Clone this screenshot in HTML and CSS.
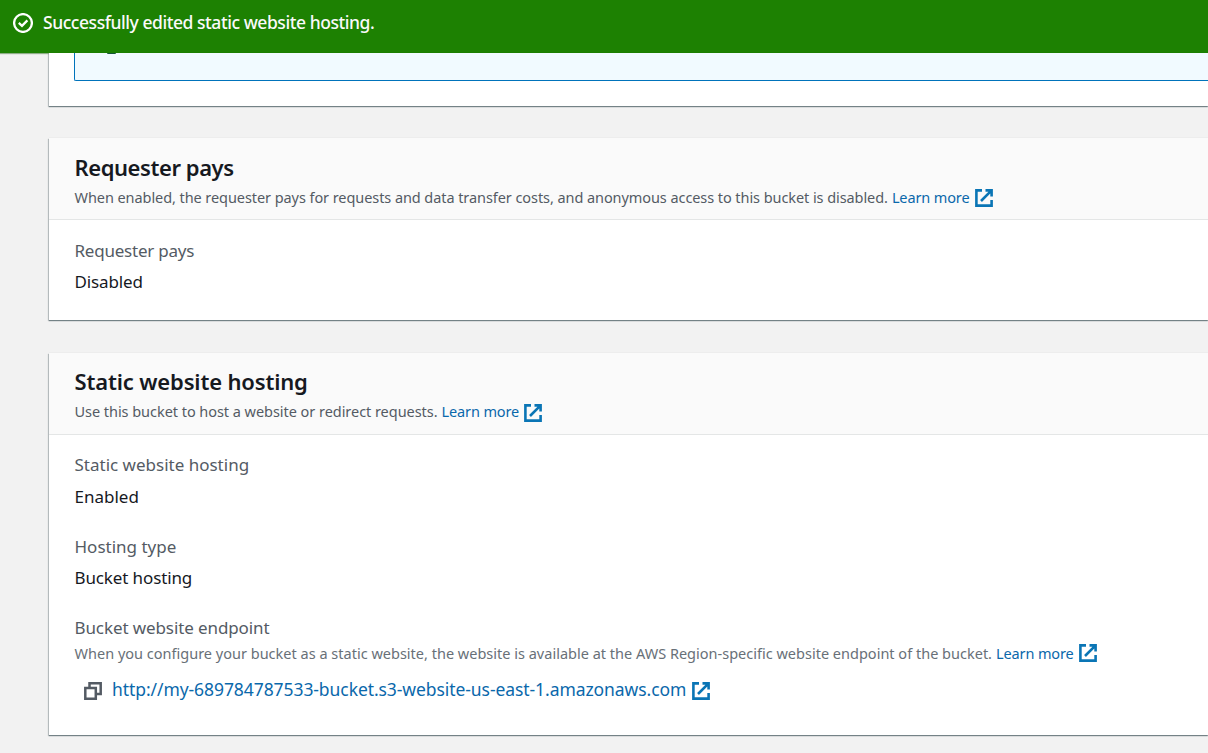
FILE: index.html
```html
<!DOCTYPE html>
<html lang="en">
<head>
<meta charset="utf-8">
<title>S3 bucket properties</title>
<link rel="stylesheet" href="styles.css">
</head>
<body>
<svg class="symbols" width="0" height="0">
  <symbol id="external" viewBox="0 0 18 18">
    <path d="M7 1.4H1.4V16.6H16.6V11M10.5 1.4H16.6V7.5M16.6 1.4L6 12" fill="none" stroke="currentColor" stroke-width="2.6"/>
  </symbol>
</svg>
<header class="flash">
  <svg class="flash-icon" viewBox="0 0 20 20"><circle cx="10" cy="10" r="8.9"/><path d="M5.8 9.8L9 12.8L14.4 7.4"/></svg>
  <span class="flash-text">Successfully edited static website hosting.</span>
</header>
<main class="content">
  <section class="card card-partial">
    <div class="info-box"><span class="info-dot"></span></div>
  </section>

  <section class="card card-requester">
    <div class="card-header">
      <h2 class="title title-requester">Requester pays</h2>
      <p class="description"><span class="desc-requester">When enabled, the requester pays for requests and data transfer costs, and anonymous access to this bucket is disabled.</span><a class="learn">Learn more</a><svg class="external"><use href="#external"/></svg></p>
    </div>
    <div class="card-body">
      <div class="label label-requester">Requester pays</div>
      <div class="value value-disabled">Disabled</div>
    </div>
  </section>

  <section class="card card-hosting">
    <div class="card-header">
      <h2 class="title title-hosting">Static website hosting</h2>
      <p class="description"><span class="desc-hosting">Use this bucket to host a website or redirect requests.</span><a class="learn">Learn more</a><svg class="external"><use href="#external"/></svg></p>
    </div>
    <div class="card-body">
      <div class="field">
        <div class="label label-hosting">Static website hosting</div>
        <div class="value value-enabled">Enabled</div>
      </div>
      <div class="field">
        <div class="label label-type">Hosting type</div>
        <div class="value value-type">Bucket hosting</div>
      </div>
      <div class="field">
        <div class="label label-endpoint">Bucket website endpoint</div>
        <p class="description constraint"><span class="desc-endpoint">When you configure your bucket as a static website, the website is available at the AWS Region-specific website endpoint of the bucket.</span><a class="learn">Learn more</a><svg class="external"><use href="#external"/></svg></p>
        <div class="endpoint">
          <svg class="copy" viewBox="0 0 18 18"><path d="M1.3 6H11.8V16.7H1.3ZM5.5 6V1.3H16.7V12H11.8"/></svg>
          <a class="url">http://my-689784787533-bucket.s3-website-us-east-1.amazonaws.com</a><svg class="external"><use href="#external"/></svg>
        </div>
      </div>
    </div>
  </section>
</main>
</body>
</html>
```
FILE: styles.css
```css
* { box-sizing: border-box; }
body {
  margin: 0;
  height: 753px;
  overflow: hidden;
  background: #f2f2f2;
  color: #16191f;
  font-family: "Noto Sans", "Open Sans", sans-serif;
  white-space: nowrap;
}
h2, p { margin: 0; }
.symbols { display: block; }
.flash {
  display: flex;
  align-items: center;
  height: 53px;
  padding: 0 0 7px 13px;
  background: #1d8102;
  box-shadow: 0 1px 1px #8fae88;
  color: #fafafa;
}
.flash-icon { width: 20px; height: 20px; margin-right: 10px; fill: none; stroke: #fff; stroke-width: 2.3; }
.flash-text { padding-bottom: 2px; font-size: 17.5px; font-weight: 500; letter-spacing: -0.45px; }
.content { padding-left: 49px; }
.card {
  background: #fff;
  box-shadow: 0 1px 1px rgba(0, 28, 36, .4), -1px 1px 1px rgba(0, 28, 36, .2), 0 -1px 1px rgba(0, 0, 0, .02);
}
.card-partial { height: 53px; padding-left: 25px; }
.info-box {
  height: 28px;
  padding-left: 32px;
  border: solid #0073bb;
  border-width: 0 0 1px 1px;
  border-radius: 0 0 0 2px;
  background: #f1faff;
}
.info-dot { display: block; width: 9px; height: 1px; border-radius: 0 0 5px 5px; background: #16553a; }
.card-requester { height: 182px; margin-top: 32px; }
.card-hosting { height: 382px; margin-top: 33px; }
.card-header {
  height: 82px;
  padding: 14px 0 0 25.5px;
  border-bottom: 1px solid #e4e6e6;
  background: #fafafa;
}
.card-hosting .card-header { padding-top: 13px; }
.title { height: 31px; font-size: 22px; line-height: 31px; font-weight: 600; }
.title-requester { letter-spacing: -0.43px; }
.title-hosting { letter-spacing: -0.16px; }
.description {
  display: flex;
  align-items: center;
  height: 28px;
  color: #545b64;
  font-size: 14.5px;
  line-height: 28px;
}
.description .external { position: relative; top: 1px; }
.card-hosting .card-header .external { top: 2px; }
.desc-requester, .desc-hosting, .desc-endpoint { margin-right: 4px; }
.desc-requester { letter-spacing: -0.073px; }
.desc-hosting { letter-spacing: -0.045px; }
.desc-endpoint { letter-spacing: 0.006px; }
.learn { color: #0a68ab; letter-spacing: -0.12px; }
.external { width: 18px; height: 18px; margin-left: 5px; color: #0a75b5; }
.card-body { padding: 15px 0 0 25.5px; }
.card-hosting .card-body { padding-top: 14px; }
.label { height: 31px; color: #545b64; font-size: 17px; line-height: 31px; }
.label-requester { letter-spacing: -0.22px; }
.label-endpoint { letter-spacing: -0.1px; }
.value { height: 31px; font-size: 17px; line-height: 31px; }
.value-disabled, .value-type { letter-spacing: -0.12px; }
.value-enabled { height: 32px; line-height: 33px; }
.field { height: 81.5px; }
.constraint { height: 22px; color: #687078; line-height: 22px; }
.constraint span, .constraint a { position: relative; top: -1px; }
.constraint .external { top: -1px; }
.endpoint { display: flex; align-items: center; height: 51px; padding-left: 9.5px; font-size: 17.5px; }
.copy { width: 18px; height: 18px; margin-right: 10px; fill: none; stroke: #545b64; stroke-width: 2.5; }
.url { padding-bottom: 3px; color: #0a68ab; letter-spacing: -0.075px; }
.endpoint .external { margin-left: 6px; }
```
